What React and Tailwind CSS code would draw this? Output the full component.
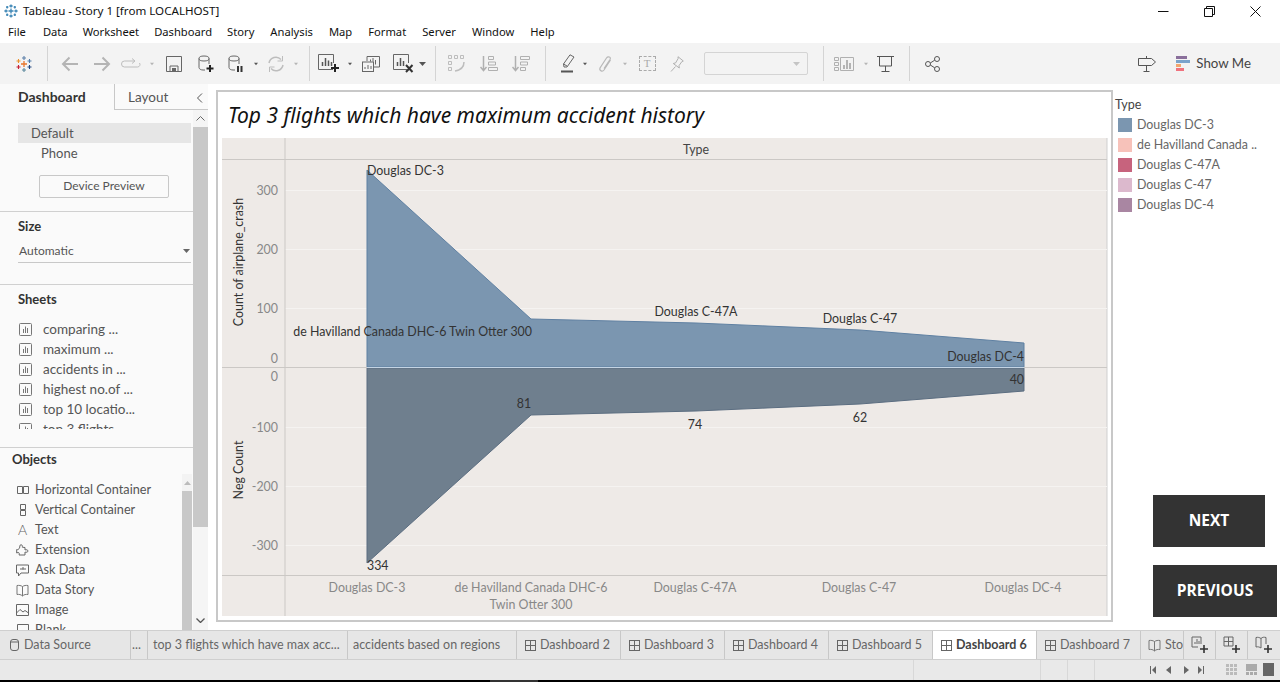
const menuItems = [
  ['File', 'mr-[17px]'],
  ['Data', 'mr-[15px]'],
  ['Worksheet', 'mr-[15px]'],
  ['Dashboard', 'mr-[15px]'],
  ['Story', 'mr-[16px]'],
  ['Analysis', 'mr-[16px]'],
  ['Map', 'mr-[16px]'],
  ['Format', 'mr-[16px]'],
  ['Server', 'mr-[16px]'],
  ['Window', 'mr-[16px]'],
  ['Help', ''],
]

const sheets = ['comparing ...', 'maximum ...', 'accidents in ...', 'highest no.of ...', 'top 10 locatio...', 'top 3 flights']

const legend = [
  ['Douglas DC-3', 'bg-[#7b96b0]'],
  ['de Havilland Canada ..', 'bg-[#f7c2ba]'],
  ['Douglas C-47A', 'bg-[#c7637d]'],
  ['Douglas C-47', 'bg-[#dcb9cd]'],
  ['Douglas DC-4', 'bg-[#a986a2]'],
]

function Caret({ color = '#b5b5b5' }) {
  return (
    <svg width="7" height="4" viewBox="0 0 7 4">
      <path d="M0 0h7L3.5 4z" fill={color} />
    </svg>
  )
}

function Slot({ className, children }) {
  return <div className={`flex shrink-0 items-center justify-center ${className}`}>{children}</div>
}

function Sep() {
  return <div className="h-[35px] w-px shrink-0 bg-[#d4d4d4]" />
}

function TableauLogo() {
  const cross = (x, y, r, c, w = 1.1) => (
    <path d={`M${x - r} ${y}H${x + r}M${x} ${y - r}V${y + r}`} stroke={c} strokeWidth={w} />
  )
  return (
    <svg width="18" height="18" viewBox="0 0 18 18">
      {cross(9, 9, 3, '#e8762b', 1.3)}
      {cross(9, 3, 2, '#5b7fa8')}
      {cross(9, 15, 2, '#59879b')}
      {cross(3.5, 6, 2, '#eb912b')}
      {cross(14.5, 6, 2, '#4e79a7')}
      {cross(3.5, 12, 2, '#c72035')}
      {cross(14.5, 12, 2, '#1f447e')}
    </svg>
  )
}

function TitleLogo() {
  const cross = (x, y, r) => <path d={`M${x - r} ${y}H${x + r}M${x} ${y - r}V${y + r}`} stroke="#3d86b5" strokeWidth="1.3" />
  return (
    <svg width="14" height="14" viewBox="0 0 14 14">
      {cross(7, 7, 2.5)}
      {cross(7, 2, 1.6)}
      {cross(7, 12, 1.6)}
      {cross(2, 7, 1.6)}
      {cross(12, 7, 1.6)}
      {cross(3.2, 3.2, 1.2)}
      {cross(10.8, 3.2, 1.2)}
      {cross(3.2, 10.8, 1.2)}
      {cross(10.8, 10.8, 1.2)}
    </svg>
  )
}

function SheetIcon() {
  return (
    <svg width="13" height="13" viewBox="0 0 13 13" className="shrink-0">
      <rect x="0.5" y="0.5" width="12" height="12" rx="1" fill="none" stroke="#777" />
      <path d="M4.5 6v4M6.5 3.5V10M8.5 5v5" stroke="#777" />
    </svg>
  )
}

function DashIcon({ color = '#666' }) {
  return (
    <svg width="11" height="11" viewBox="0 0 11 11" className="shrink-0">
      <rect x="0.5" y="0.5" width="10" height="10" fill="none" stroke={color} />
      <path d="M5.5 0.5v10M0.5 5.5h10" stroke={color} />
    </svg>
  )
}

function BookIcon({ color = '#777' }) {
  return (
    <svg width="13" height="13" viewBox="0 0 13 13" className="shrink-0">
      <path d="M6.5 2.5C5 1.5 3 1.2 1 1.5v9c2-.3 4 0 5.5 1.5 1.5-1.500 3.500-1.800 5.500-1.500v-9c-2-.3-4 0-5.500 1zM6.500 2.500V12" fill="none" stroke={color} />
    </svg>
  )
}

function Toolbar() {
  return (
    <div className="flex h-[41px] shrink-0 items-center bg-[#f3f3f3]">
      <Slot className="w-[47px]"><TableauLogo /></Slot>
      <Sep />
      <Slot className="w-[44px]">
        <svg width="18" height="16" viewBox="0 0 18 16"><path d="M17 8H2M8.500 1.500 2 8l6.500 6.500" fill="none" stroke="#b4b4b4" strokeWidth="2" /></svg>
      </Slot>
      <Slot className="w-[20px]">
        <svg width="18" height="16" viewBox="0 0 18 16"><path d="M1 8h15M9.500 1.500 16 8l-6.500 6.500" fill="none" stroke="#b4b4b4" strokeWidth="2" /></svg>
      </Slot>
      <Slot className="w-[38px]">
        <svg width="20" height="12" viewBox="0 0 20 12"><path d="M13 3H3.500a2.500 2.500 0 0 0 0 6h13a2.500 2.500 0 0 0 2-4M11 .5 14 3l-3 2.500" fill="none" stroke="#bdbdbd" /></svg>
      </Slot>
      <Slot className="w-[4px]"><Caret /></Slot>
      <Slot className="w-[40px]">
        <svg width="16" height="16" viewBox="0 0 16 16"><path d="M.5.500h15v15H.5zM4 15.500V10h8v5.500" fill="none" stroke="#666" /><rect x="6" y="12" width="4" height="3.500" fill="#666" /></svg>
      </Slot>
      <Slot className="w-[24px]">
        <svg width="16" height="18" viewBox="0 0 16 18"><path d="M1 3.500v9C1 14 3 15 5 15h2M11 3.500V9" fill="none" stroke="#666" /><ellipse cx="6" cy="3.500" rx="5" ry="2.500" fill="none" stroke="#666" /><path d="M12 10v7M8.500 13.500h7" stroke="#222" strokeWidth="2" /></svg>
      </Slot>
      <Slot className="w-[36px]">
        <svg width="16" height="18" viewBox="0 0 16 18"><path d="M1 3.500v9C1 14 3 15 5 15h2M11 3.500V9" fill="none" stroke="#666" /><ellipse cx="6" cy="3.500" rx="5" ry="2.500" fill="none" stroke="#666" /><path d="M10 11v6M13.500 11v6" stroke="#333" strokeWidth="2" /></svg>
      </Slot>
      <Slot className="w-[4px]"><Caret color="#555" /></Slot>
      <Slot className="w-[36px]">
        <svg width="18" height="18" viewBox="0 0 18 18"><path d="M2 8a7 7 0 0 1 12-3.500M16 10a7 7 0 0 1-12 3.500" fill="none" stroke="#bdbdbd" strokeWidth="1.500" /><path d="M15.500 1v5h-5M2.500 17v-5h5" fill="none" stroke="#bdbdbd" /></svg>
      </Slot>
      <Slot className="w-[4px]"><Caret /></Slot>
      <div className="w-[11px] shrink-0" />
      <Sep />
      <Slot className="w-[38px]">
        <svg width="22" height="20" viewBox="0 0 22 20"><path d="M15 15.500H.5V.500h15V9" fill="none" stroke="#666" /><path d="M4.500 12V8M7.500 12V4M10.500 12V6.500M13.500 12V8" stroke="#555" strokeWidth="1.500" /><path d="M17 10v8M13 14h8" stroke="#222" strokeWidth="2" /></svg>
      </Slot>
      <Slot className="w-[4px]"><Caret color="#555" /></Slot>
      <Slot className="w-[38px]">
        <svg width="18" height="16" viewBox="0 0 18 16"><path d="M5 5V.5h12.500V11H11" fill="none" stroke="#666" /><rect x=".5" y="6" width="11" height="9.500" fill="#f3f3f3" stroke="#666" /><path d="M8.500 3.500v2M11 2v3.500M13.500 4v4.500M3 13v-2M6 13v-4M9 13v-3" stroke="#666" /></svg>
      </Slot>
      <Slot className="w-[26px]">
        <svg width="21" height="19" viewBox="0 0 21 19"><path d="M14 15.500H.5V.500h15V9" fill="none" stroke="#666" /><path d="M4.500 12V8M7.500 12V4M10.500 12V7" stroke="#555" strokeWidth="1.500" /><path d="m13 11 6.500 7M19.500 11 13 18" stroke="#333" strokeWidth="2" /></svg>
      </Slot>
      <Slot className="w-[12px]"><Caret color="#555" /></Slot>
      <div className="w-[7px] shrink-0" />
      <Sep />
      <Slot className="w-[42px]">
        <svg width="18" height="18" viewBox="0 0 18 18"><g fill="none" stroke="#bdbdbd"><path d="M.5.500h3v3h-3zM6.500.500h3v3h-3zM12.500.500h3v3h-3zM.5 6.500h3v3h-3zM.5 12.500h3v3h-3z" /><path d="M16 7c0 5-3 8-9 9" strokeWidth="1.500" /></g></svg>
      </Slot>
      <Slot className="w-[22px]">
        <svg width="18" height="16" viewBox="0 0 18 16"><path d="M3.500 0v14M.5 11l3 3.500 3-3.500" fill="none" stroke="#b0b0b0" strokeWidth="1.500" /><path d="M8.500.500h5v3h-5zM8.500 6h7v3h-7zM8.500 11.500h9v3h-9z" fill="none" stroke="#b0b0b0" /></svg>
      </Slot>
      <Slot className="w-[42px]">
        <svg width="18" height="16" viewBox="0 0 18 16"><path d="M3.500 0v14M.5 11l3 3.500 3-3.500" fill="none" stroke="#b0b0b0" strokeWidth="1.500" /><path d="M8.500.500h9v3h-9zM8.500 6h7v3h-7zM8.500 11.500h5v3h-5z" fill="none" stroke="#b0b0b0" /></svg>
      </Slot>
      <div className="w-[3px] shrink-0" />
      <Sep />
      <div className="w-[7px] shrink-0" />
      <Slot className="w-[30px]">
        <svg width="14" height="19" viewBox="0 0 14 19"><path d="M9 .8 13 3 6 13H3l-.5-3zM2.500 10l3.500 2" fill="none" stroke="#666" /><rect x="0" y="16.500" width="12" height="2" fill="#555" /></svg>
      </Slot>
      <Slot className="w-[4px]"><Caret color="#555" /></Slot>
      <Slot className="w-[36px]">
        <svg width="14" height="18" viewBox="0 0 14 18"><path d="M12.500 5 6 15c-1.500 2-5 1-4-2L8.500 3C10 .8 13.500 2 12 4.500L6 13.500" fill="none" stroke="#b8b8b8" strokeWidth="1.200" /></svg>
      </Slot>
      <Slot className="w-[4px]"><Caret /></Slot>
      <Slot className="w-[40px]">
        <div className="flex h-[15px] w-[17px] items-center justify-center border border-dashed border-[#aaa] font-['Liberation_Serif',serif] text-[11px] leading-none text-[#aaa]">T</div>
      </Slot>
      <Slot className="w-[20px]">
        <svg width="14" height="16" viewBox="0 0 14 16"><path d="M8 .7 13.300 5l-1.500.7-2.800 4 .3 2.300-6-4.500 2.300-.6 2.500-4.300zM5.500 10.500 1 15.500" fill="none" stroke="#b0b0b0" /></svg>
      </Slot>
      <div className="w-[17px] shrink-0" />
      <div className="flex h-[23px] w-[104px] shrink-0 items-center justify-end rounded-[2px] border border-[#d4d4d4] pr-[7px]"><Caret color="#c4c4c4" /></div>
      <div className="w-[15px] shrink-0" />
      <Sep />
      <Slot className="w-[40px]">
        <svg width="20" height="14" viewBox="0 0 20 14"><path d="M.5.500h4v3h-4zM.5 5.500h4v3h-4zM.5 10.500h4v3h-4zM6.500.500h13v13h-13z" fill="none" stroke="#b0b0b0" /><path d="M10 12V8M13 12V3M16 12V6" stroke="#a0a0a0" strokeWidth="1.500" /></svg>
      </Slot>
      <Slot className="w-[4px]"><Caret /></Slot>
      <Slot className="w-[34px]">
        <svg width="17" height="16" viewBox="0 0 17 16"><path d="M0 .5h17M2.500 1v9h12V1M8.500 10v5M4.500 15.500h8" fill="none" stroke="#555" /></svg>
      </Slot>
      <div className="w-[7px] shrink-0" />
      <Sep />
      <Slot className="w-[44px]">
        <svg width="15" height="16" viewBox="0 0 15 16"><g fill="none" stroke="#555"><circle cx="3" cy="8" r="2.500" /><circle cx="12" cy="3" r="2.500" /><circle cx="12" cy="13" r="2.500" /><path d="m5.300 7 4.400-2.800M5.300 9l4.400 2.800" /></g></svg>
      </Slot>
      <div className="flex-1" />
      <svg width="18" height="16" viewBox="0 0 18 16" className="mr-[20px] shrink-0"><path d="M.5 2.500h13l4 3.500-4 3.500H.5zM8.500 0v2.500M8.500 9.500V15M5.500 15.500h6" fill="none" stroke="#555" /></svg>
      <div className="flex shrink-0 items-center">
        <div className="flex w-[14px] flex-col gap-[1px]">
          <div className="h-[3px] w-[11px] bg-[#8a6f9b]" />
          <div className="h-[3px] w-[14px] bg-[#7ba3cb]" />
          <div className="h-[3px] w-[5px] bg-[#f2a66e]" />
          <div className="h-[3px] w-[8px] bg-[#f0727e]" />
        </div>
        <span className="ml-[6px] mr-[29px] text-[13.300px] leading-none text-[#444]">Show Me</span>
      </div>
    </div>
  )
}

function Sidebar() {
  return (
    <aside className="flex w-[208px] shrink-0 flex-col bg-[#fafafa]">
      <div className="flex h-[26px] shrink-0">
        <div className="flex w-[114px] items-center pb-[2px] pl-[18px] text-[14px] font-bold text-[#333]">Dashboard</div>
        <div className="flex flex-1 items-center justify-between border-b border-l border-[#c8c8c8] pl-[13px] pr-[5px] pt-[2px] text-[13.500px] text-[#555]">
          <span>Layout</span>
          <svg width="7" height="10" viewBox="0 0 7 10"><path d="M6 .5 1.500 5 6 9.500" fill="none" stroke="#555" /></svg>
        </div>
      </div>
      <div className="flex min-h-0 flex-1">
        <div className="flex w-[193px] shrink-0 flex-col">
          <div className="h-[102px] shrink-0 border-b border-[#d0d0d0] pt-[13px]">
            <div className="ml-[18px] flex h-[20px] w-[173px] items-center bg-[#e6e6e6] pl-[13px] pt-[2px] text-[13px] text-[#555]">Default</div>
            <div className="flex h-[20px] items-center pl-[41px] pt-[2px] text-[13px] text-[#555]">Phone</div>
            <div className="ml-[39px] mt-[12px] flex h-[23px] w-[130px] items-center justify-center rounded-[2px] border border-[#c8c8c8] pb-[2px] text-[12px] text-[#555]">Device Preview</div>
          </div>
          <div className="h-[73px] shrink-0 border-b border-[#d0d0d0] px-[18px] pr-[2px] pt-[5px]">
            <div className="text-[13px] font-bold leading-[18px] text-[#333]">Size</div>
            <div className="mt-[7px] flex h-[21px] items-center justify-between border-b border-[#c8c8c8] pb-[2px] pl-[1px] pr-[1px] text-[12px] text-[#555]">
              <span>Automatic</span>
              <Caret color="#666" />
            </div>
          </div>
          <div className="h-[163px] shrink-0 border-b border-[#d0d0d0] pt-[5px]">
            <div className="pl-[18px] text-[13px] font-bold leading-[18px] text-[#333]">Sheets</div>
            <div className="mt-[11px] h-[110px] overflow-hidden pl-[19px]">
              {sheets.map((s) => (
                <div key={s} className="flex h-[20px] items-center gap-[11px] text-[13.500px] text-[#555]">
                  <SheetIcon />
                  <span className="whitespace-nowrap">{s}</span>
                </div>
              ))}
            </div>
          </div>
          <div className="flex min-h-0 flex-1 flex-col pt-[2px]">
            <div className="pl-[12px] text-[13px] font-bold leading-[18px] text-[#333]">Objects</div>
            <div className="mt-[6px] flex min-h-0 flex-1 pl-[16px]">
              <div className="mt-[6px] min-w-0 flex-1 overflow-hidden">
                {[
                  ['Horizontal Container', <svg key="h" width="12" height="8" viewBox="0 0 12 8"><path d="M.5.500h5v7h-5zM6.500.500h5v7h-5z" fill="none" stroke="#666" /></svg>],
                  ['Vertical Container', <svg key="v" width="8" height="12" viewBox="0 0 8 12"><path d="M1.500.500h5v5h-5zM1.500 6.500h5v5h-5z" fill="none" stroke="#666" /></svg>],
                  ['Text', <span key="t" className="text-[14px] font-light leading-none text-[#666]">A</span>],
                  ['Extension', <svg key="e" width="13" height="13" viewBox="0 0 13 13"><path d="M5 .7c1.500 0 1.500 1.800 1.300 2.500L9 3.500V6c1-.5 3-.3 3 1s-2 1.500-3 1v3H3c.5-1 .5-2.500-1-2.500L.7 9V5.500C2 6 3 5 3.500 4 4 3 3.500.7 5 .7z" fill="none" stroke="#666" /></svg>],
                  ['Ask Data', <svg key="a" width="13" height="13" viewBox="0 0 13 13"><path d="M.5 1h12v8H5l-2.500 3V9h-2zM7 3v2.500M4 5h6" fill="none" stroke="#666" /></svg>],
                  ['Data Story', <BookIcon key="b" />],
                  ['Image', <svg key="i" width="13" height="12" viewBox="0 0 13 12"><path d="M.5.500h12v11H.5zM.5 9 4 5.500 7 8l2-1.500 3.500 2.500" fill="none" stroke="#666" /></svg>],
                  ['Blank', <svg key="bl" width="12" height="12" viewBox="0 0 12 12"><path d="M.5.500h11v11H.5z" fill="none" stroke="#666" /></svg>],
                ].map(([label, icon]) => (
                  <div key={label} className="flex h-[20px] items-center text-[12.700px] text-[#555]">
                    <div className="flex w-[13px] shrink-0 items-center justify-center">{icon}</div>
                    <span className="ml-[6px] whitespace-nowrap">{label}</span>
                  </div>
                ))}
              </div>
              <div className="flex w-[10px] shrink-0 flex-col bg-[#f3f3f3]">
                <div className="flex h-[17px] items-center justify-center">
                  <svg width="7" height="4" viewBox="0 0 7 4"><path d="M0 4h7L3.500 0z" fill="#bbb" /></svg>
                </div>
                <div className="flex-1 bg-[#c8c8c8]" />
              </div>
              <div className="w-px shrink-0" />
            </div>
          </div>
        </div>
        <div className="flex w-[15px] shrink-0 flex-col bg-[#f5f5f5]">
          <div className="flex h-[17px] items-center justify-center">
            <svg width="9" height="5" viewBox="0 0 9 5"><path d="M.5 4.500 4.500.5l4 4" fill="none" stroke="#666" /></svg>
          </div>
          <div className="h-[400px] bg-[#c8c8c8]" />
          <div className="flex-1" />
          <div className="flex h-[20px] items-center justify-center">
            <svg width="9" height="5" viewBox="0 0 9 5"><path d="M.5.500l4 4 4-4" fill="none" stroke="#555" strokeWidth="1.300" /></svg>
          </div>
        </div>
      </div>
    </aside>
  )
}

function Chart() {
  const grid = [190, 249, 308, 427, 486, 545]
  const ticks = [
    ['300', 190], ['200', 249], ['100', 308], ['0', 358],
    ['0', 376], ['-100', 427], ['-200', 486], ['-300', 545],
  ]
  const cats = [['Douglas DC-3', 367], ['de Havilland Canada DHC-6', 531], ['Douglas C-47A', 695], ['Douglas C-47', 859], ['Douglas DC-4', 1023]]
  return (
    <svg viewBox="222 138 886 478" className="block h-[478px] w-[886px]" fontFamily="Lato, sans-serif" fontSize="12.400">
      <rect x="222" y="138" width="885" height="478" fill="#eeeae7" />
      <path d="M1107 138v478" stroke="#cfcfcf" />
      {grid.map((y) => <path key={y} d={`M285 ${y + 0.5}H1107`} stroke="#f5f3f1" />)}
      <path d="M285 138v478M222 159.500h885M222 367.500h885M222 575.500h885" stroke="#cbc8c5" />
      <path d="M367 367V170L531 319 696 323 860 330 1024 343V367Z" fill="#7b96b0" stroke="#5f80a2" />
      <path d="M367 368V563L531 415 696 411 860 404 1024 391V368Z" fill="#6f7f8e" stroke="#5b6d80" />
      <path d="M367 367.500H1024" stroke="#c4d4e4" />
      <text x="696" y="149" textAnchor="middle" dominantBaseline="central" fill="#444">Type</text>
      <text x="238" y="262" textAnchor="middle" dominantBaseline="central" fill="#333" transform="rotate(-90 238 262)">Count of airplane_crash</text>
      <text x="238" y="470" textAnchor="middle" dominantBaseline="central" fill="#333" transform="rotate(-90 238 470)">Neg Count</text>
      {ticks.map(([t, y]) => (
        <text key={`${t}-${y}`} x="278" y={y} textAnchor="end" dominantBaseline="central" fill="#888">{t}</text>
      ))}
      {cats.map(([t, x]) => (
        <text key={t} x={x} y="587" textAnchor="middle" dominantBaseline="central" fill="#888">{t}</text>
      ))}
      <text x="531" y="604" textAnchor="middle" dominantBaseline="central" fill="#888">Twin Otter 300</text>
      <g fill="#333" dominantBaseline="central">
        <text x="367" y="170">Douglas DC-3</text>
        <text x="532" y="331" textAnchor="end">de Havilland Canada DHC-6 Twin Otter 300</text>
        <text x="696" y="311" textAnchor="middle">Douglas C-47A</text>
        <text x="860" y="318" textAnchor="middle">Douglas C-47</text>
        <text x="1024" y="356" textAnchor="end">Douglas DC-4</text>
        <text x="524" y="403" textAnchor="middle">81</text>
        <text x="695" y="424" textAnchor="middle">74</text>
        <text x="860" y="417" textAnchor="middle">62</text>
        <text x="1024" y="379" textAnchor="end">40</text>
        <text x="367" y="565">334</text>
      </g>
    </svg>
  )
}

function Tab({ w, icon, children, active }) {
  return (
    <div className={`flex h-full shrink-0 items-center overflow-hidden whitespace-nowrap border-r border-[#c8c8c8] ${w} ${active ? 'bg-white font-bold text-[#444]' : 'text-[#666]'}`}>
      {icon}
      {children}
    </div>
  )
}

function TabBar() {
  const dash = (n, w, active) => (
    <Tab w={w} active={active} icon={<div className="ml-[8px] mr-[4px] flex"><DashIcon /></div>}>Dashboard {n}</Tab>
  )
  const addIcon = (inner) => (
    <svg width="18" height="18" viewBox="0 0 18 18">
      {inner}
      <path d="M13 9v8M9 13h8" stroke="#333" strokeWidth="1.600" />
    </svg>
  )
  return (
    <div className="flex h-[30px] shrink-0 border-y border-[#cfcfcf] bg-[#e6e6e6] text-[12.500px]">
      <Tab w="w-[131px]" icon={<svg width="9" height="12" viewBox="0 0 9 12" className="ml-[10px] mr-[5px]"><rect x=".5" y=".5" width="8" height="11" rx="2.500" fill="none" stroke="#666" /><path d="M.5 3h8" stroke="#666" /></svg>}>Data Source</Tab>
      <Tab w="w-[17px] pl-[1px]">...</Tab>
      <Tab w="w-[200px] pl-[5px]">top 3 flights which have max acc...</Tab>
      <Tab w="w-[169px] pl-[5px]">accidents based on regions</Tab>
      {dash(2, 'w-[104px]')}
      {dash(3, 'w-[104px]')}
      {dash(4, 'w-[104px]')}
      {dash(5, 'w-[104px]')}
      {dash(6, 'w-[104px]', true)}
      {dash(7, 'w-[104px]')}
      <Tab w="w-[43px]" icon={<div className="ml-[7px] mr-[4px] flex"><BookIcon /></div>}>Sto</Tab>
      <Slot className="h-full w-[32px] border-r border-[#c8c8c8]">
        {addIcon(<><path d="M10 8V1H1v10h6" fill="none" stroke="#666" /><path d="M4 8V6M6 8V3M8 8V5" stroke="#666" /></>)}
      </Slot>
      <Slot className="h-full w-[32px] border-r border-[#c8c8c8]">
        {addIcon(<path d="M1 1h9v9H1zM5.500 1v9M1 5.500h9" fill="none" stroke="#666" />)}
      </Slot>
      <Slot className="h-full w-[32px]">
        {addIcon(<path d="M6 2.500C4.500 1.500 3 1 1 1.500V11c2-.5 3.500 0 5 1V2.500C7.500 1 9 1 11 1.500V8" fill="none" stroke="#666" />)}
      </Slot>
    </div>
  )
}

function StatusBar() {
  return (
    <div className="flex h-[20px] shrink-0 items-center bg-[#e9e9e9]">
      <div className="w-[913px] shrink-0" />
      <div className="h-full w-[127px] shrink-0 border-l border-[#d8d8d8]" />
      <div className="h-full w-[27px] shrink-0 border-l border-[#d8d8d8]" />
      <div className="h-full w-[27px] shrink-0 border-l border-[#d8d8d8]" />
      <div className="h-full w-[56px] shrink-0 border-l border-[#d8d8d8]" />
      <svg width="54" height="8" viewBox="0 0 54 8" className="shrink-0">
        <path d="M0 0h1v8H0zM6 0v8L2 4zM21 0v8l-5-4zM34 0v8l5-4zM48 0v8l4-4zM53 0h1v8h-1z" fill="#666" />
      </svg>
      <svg width="48" height="14" viewBox="0 0 48 14" className="ml-[22px] shrink-0">
        <path d="M0 1h3v3H0zM4 1h3v3H4zM8 1h3v3H8zM0 5h3v3H0zM4 5h3v3H4zM8 5h3v3H8zM0 9h3v3H0zM4 9h3v3H4zM8 9h3v3H8z" fill="#bbb" />
        <path d="M20 1h11v7H20zM20 9h3v3h-3zM24 9h3v3h-3zM28 9h3v3h-3z" fill="#aaa" />
        <rect x="37" y="0" width="11" height="13" fill="#666" />
      </svg>
    </div>
  )
}

export default function App() {
  return (
    <div className="flex h-[682px] w-[1280px] flex-col overflow-hidden bg-white font-['Lato',sans-serif]">
      {/* Title bar */}
      <div className="flex h-[22px] shrink-0 items-center pl-[4px] font-['Noto_Sans',sans-serif] text-[11.600px] text-[#111]">
        <TitleLogo />
        <span className="ml-[5px]">Tableau - Story 1 [from LOCALHOST]</span>
        <div className="ml-auto flex items-center pr-[19px]">
          <svg width="11" height="11" viewBox="0 0 11 11" className="mr-[35px]"><path d="M0 5.500h10.500" stroke="#111" /></svg>
          <svg width="11" height="11" viewBox="0 0 11 11" className="mr-[35px]"><path d="M.5 2.500h8v8h-8zM2.500 2.500v-2h8v8h-2" fill="none" stroke="#111" /></svg>
          <svg width="11" height="11" viewBox="0 0 11 11"><path d="m.5.500 10 10M10.500.500l-10 10" stroke="#111" /></svg>
        </div>
      </div>

      {/* Menu */}
      <div className="flex h-[21px] shrink-0 items-center pl-[8px] font-['Noto_Sans',sans-serif] text-[11.200px] text-[#111]">
        {menuItems.map(([m, cls]) => <span key={m} className={cls}>{m}</span>)}
      </div>

      <Toolbar />

      <div className="flex min-h-0 flex-1">
        <Sidebar />

        {/* Story canvas */}
        <div className="ml-[8px] mt-[6px] h-[532px] w-[897px] shrink-0 border-2 border-[#c8c8c8] px-[4px] pb-[4px] pr-[1px]">
          <div className="flex h-[46px] items-center pl-[6px] pt-[1px] font-['Noto_Sans',sans-serif] text-[21px] italic text-[#111]">
            Top 3 flights which have maximum accident history
          </div>
          <Chart />
        </div>

        {/* Legend and story buttons */}
        <div className="flex min-w-0 flex-1 flex-col pb-[13px] pl-[2px] pt-[13px]">
          <div className="text-[12.500px] leading-[16px] text-[#444]">Type</div>
          <div className="mt-[2px]">
            {legend.map(([label, cls]) => (
              <div key={label} className="flex h-[20px] items-center pl-[3px] text-[12.400px] text-[#666]">
                <div className={`h-[14px] w-[14px] shrink-0 ${cls}`} />
                <span className="ml-[5px] whitespace-nowrap">{label}</span>
              </div>
            ))}
          </div>
          <div className="ml-[38px] mt-auto flex h-[52px] w-[112px] items-center justify-center bg-[#333] font-['Open_Sans',sans-serif] text-[15.500px] font-bold text-white">NEXT</div>
          <div className="ml-[38px] mt-[18px] flex h-[52px] w-[124px] items-center justify-center bg-[#333] font-['Open_Sans',sans-serif] text-[15.500px] font-bold text-white">PREVIOUS</div>
        </div>
      </div>

      <TabBar />
      <StatusBar />
      <div className="flex h-[2px] shrink-0 bg-black">
        <div className="ml-[490px] w-[48px] bg-[#333]" />
      </div>
    </div>
  )
}
